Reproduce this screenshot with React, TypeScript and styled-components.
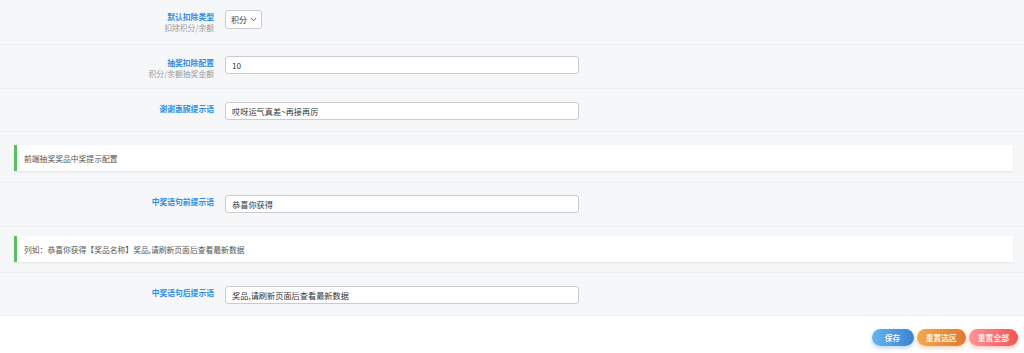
import React from 'react';
import styled, { createGlobalStyle } from 'styled-components';

const GlobalStyle = createGlobalStyle`
  html, body {
    margin: 0;
    padding: 0;
    background: #ffffff;
    font-family: "Noto Sans CJK SC", "Noto Sans", "Liberation Sans", sans-serif;
  }
  * {
    box-sizing: border-box;
  }
`;

interface FieldProps {
  label: string;
  hint?: string;
  children: React.ReactNode;
  pad?: number;
}

const Field = ({ label, hint, children, pad = 11 }: FieldProps) => (
  <Row $pad={pad}>
    <LabelCol>
      <Label>{label}</Label>
      {hint && <Hint>{hint}</Hint>}
    </LabelCol>
    <Control>{children}</Control>
  </Row>
);

const App = () => {
  return (
    <>
      <GlobalStyle />
      <Page>
        <Form>
          <Field label="默认扣除类型" hint="扣除积分/余额" pad={10}>
            <Select>
              <span>积分</span>
              <svg width="7" height="5" viewBox="0 0 7 5">
                <path d="M0.8 1 L3.5 3.8 L6.2 1" fill="none" stroke="#555" strokeWidth="0.9" />
              </svg>
            </Select>
          </Field>
          <Field label="抽奖扣除配置" hint="积分/余额抽奖金额">
            <Input defaultValue="10" />
          </Field>
          <Field label="谢谢惠顾提示语" pad={13}>
            <Input defaultValue="哎呀运气真差~再接再厉" />
          </Field>
          <NoticeRow $top={13} $bottom={11}>
            <Notice>前端抽奖奖品中奖提示配置</Notice>
          </NoticeRow>
          <Field label="中奖语句前提示语" pad={12}>
            <Input defaultValue="恭喜你获得" />
          </Field>
          <NoticeRow $top={9} $bottom={10}>
            <Notice>列如：恭喜你获得【奖品名称】奖品,请刷新页面后查看最新数据</Notice>
          </NoticeRow>
          <Field label="中奖语句后提示语" pad={13}>
            <Input defaultValue="奖品,请刷新页面后查看最新数据" />
          </Field>
        </Form>
        <Footer>
          <Button $from="#67b4ee" $to="#3a84cf" $shadow="rgba(58,132,207,0.35)">保存</Button>
          <Button $from="#f5a84a" $to="#e07832" $shadow="rgba(224,120,50,0.35)">重置选区</Button>
          <Button $from="#ff9494" $to="#f25454" $shadow="rgba(242,84,84,0.35)">重置全部</Button>
        </Footer>
      </Page>
    </>
  );
};

const Page = styled.div`
  width: 1024px;
  height: 353px;
  display: flex;
  flex-direction: column;
  overflow: hidden;
`;

const Form = styled.div`
  background: #f6f7f9;
  display: flex;
  flex-direction: column;
`;

const Row = styled.div<{ $pad: number }>`
  display: flex;
  align-items: flex-start;
  height: ${p => (p.$pad === 10 ? 45 : p.$pad === 13 ? 43 : 44)}px;
  padding-top: ${p => p.$pad}px;
  border-bottom: 1px solid #eceef1;
`;

const LabelCol = styled.div`
  width: 215px;
  padding-right: 1px;
  display: flex;
  flex-direction: column;
  align-items: flex-end;
  padding-top: 1px;
`;

const Label = styled.div`
  font-size: 7.8px;
  line-height: 11px;
  font-weight: 700;
  color: #2f8ce6;
`;

const Hint = styled.div`
  font-size: 7.8px;
  line-height: 11px;
  color: #9a9a9a;
`;

const Control = styled.div`
  margin-left: 10px;
  display: flex;
`;

const Input = styled.input`
  width: 354px;
  height: 18px;
  border: 1px solid #c9cbcf;
  border-radius: 3px;
  background: #ffffff;
  padding: 0 6px;
  font-family: "Noto Sans CJK SC", "Noto Sans", "Liberation Sans", sans-serif;
  font-size: 8.2px;
  color: #333;
  outline: none;
`;

const Select = styled.div`
  width: 37px;
  height: 19px;
  border: 1px solid #c9cbcf;
  border-radius: 3px;
  background: #ffffff;
  display: flex;
  align-items: center;
  gap: 3px;
  padding-left: 5px;
  font-size: 8px;
  color: #333;
`;

const NoticeRow = styled.div<{ $top: number; $bottom: number }>`
  padding: ${p => p.$top}px 11px ${p => p.$bottom}px 14px;
  border-bottom: 1px solid #eceef1;
`;

const Notice = styled.div`
  height: 26px;
  background: #ffffff;
  border-left: 3px solid #5cbf62;
  box-shadow: 0 1px 2px rgba(0, 0, 0, 0.08);
  display: flex;
  align-items: center;
  padding-left: 7px;
  font-size: 7.8px;
  color: #555;
`;

const Footer = styled.div`
  flex: 1;
  background: #ffffff;
  display: flex;
  justify-content: flex-end;
  align-items: flex-start;
  gap: 3px;
  padding: 13px 6px 0 0;
`;

const Button = styled.button<{ $from: string; $to: string; $shadow: string }>`
  height: 17px;
  padding: 0 9px;
  min-width: 42px;
  border: none;
  border-radius: 9px;
  background: linear-gradient(to right, ${p => p.$from}, ${p => p.$to});
  box-shadow: 0 2px 4px ${p => p.$shadow};
  color: #ffffff;
  font-family: "Noto Sans CJK SC", "Noto Sans", "Liberation Sans", sans-serif;
  font-size: 7.8px;
  font-weight: 500;
  cursor: pointer;
`;

export default App;
